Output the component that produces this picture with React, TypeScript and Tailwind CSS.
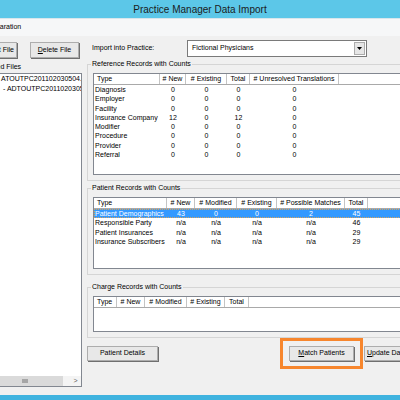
type Col = { label: string; w: string; left?: boolean };

const refCols: Col[] = [
  { label: 'Type', w: 'w-[66px]', left: true },
  { label: '# New', w: 'w-[26px]' },
  { label: '# Existing', w: 'w-[41px]' },
  { label: 'Total', w: 'w-[23px]' },
  { label: '# Unresolved Translations', w: 'w-[89px]' },
];

const refRows = [
  ['Diagnosis', '0', '0', '0', '0'],
  ['Employer', '0', '0', '0', '0'],
  ['Facility', '0', '0', '0', '0'],
  ['Insurance Company', '12', '0', '12', '0'],
  ['Modifier', '0', '0', '0', '0'],
  ['Procedure', '0', '0', '0', '0'],
  ['Provider', '0', '0', '0', '0'],
  ['Referral', '0', '0', '0', '0'],
];

const patientCols: Col[] = [
  { label: 'Type', w: 'w-[73px]', left: true },
  { label: '# New', w: 'w-[28px]' },
  { label: '# Modified', w: 'w-[42px]' },
  { label: '# Existing', w: 'w-[40px]' },
  { label: '# Possible Matches', w: 'w-[68px]' },
  { label: 'Total', w: 'w-[23px]' },
];

const patientRows = [
  ['Patient Demographics', '43', '0', '0', '2', '45'],
  ['Responsible Party', 'n/a', 'n/a', 'n/a', 'n/a', '46'],
  ['Patient Insurances', 'n/a', 'n/a', 'n/a', 'n/a', '29'],
  ['Insurance Subscribers', 'n/a', 'n/a', 'n/a', 'n/a', '29'],
];

const chargeCols: Col[] = [
  { label: 'Type', w: 'w-[23px]', left: true },
  { label: '# New', w: 'w-[28px]' },
  { label: '# Modified', w: 'w-[42px]' },
  { label: '# Existing', w: 'w-[38px]' },
  { label: 'Total', w: 'w-[24px]' },
];

function ListView({ cols, rows, height, selected }: { cols: Col[]; rows: string[][]; height: string; selected?: number }) {
  return (
    <div className={`${height} overflow-hidden border border-[#828790] bg-white`}>
      <div className="flex h-[11px] border-b border-[#a9a9a9] leading-[10px]">
        {cols.map((c) => (
          <div
            key={c.label}
            className={`${c.w} shrink-0 overflow-hidden whitespace-nowrap border-r border-[#c4c4c4] ${c.left ? 'pl-[3px]' : 'text-center'}`}
          >
            {c.label}
          </div>
        ))}
        <div className="flex-1 border-r border-[#c4c4c4]" />
      </div>
      {rows.map((r, i) => (
        <div
          key={r[0]}
          className={`flex h-[9.3px] leading-[9.3px] ${i === selected ? 'bg-[#3399ff] text-white outline outline-1 -outline-offset-1 outline-dotted outline-[#d9a35a]' : ''}`}
        >
          {r.map((v, j) => (
            <div key={j} className={`${cols[j].w} shrink-0 whitespace-nowrap ${j === 0 ? 'pl-[1px]' : 'text-center'}`}>
              {v}
            </div>
          ))}
        </div>
      ))}
    </div>
  );
}

function Group({ title, className, children }: { title: string; className: string; children: React.ReactNode }) {
  return (
    <div className={`border border-[#d5d5d5] pb-[5px] pl-[5px] ${className}`}>
      <div className="-ml-[2px] -mt-[6px] h-[10px] w-fit bg-[#f0f0f0] px-px leading-[10px]">{title}</div>
      <div className="mt-[4px]">{children}</div>
    </div>
  );
}

function Btn({ w, align = 'justify-center', children }: { w: string; align?: string; children: React.ReactNode }) {
  return (
    <div
      className={`${w} ${align} flex h-full shrink-0 items-center overflow-hidden whitespace-nowrap border border-[#adadad] bg-[#e8e8e8] shadow-[1px_1px_0_#6f6f6f]`}
    >
      {children}
    </div>
  );
}

export default function App() {
  return (
    <div className="h-[400px] w-[400px] overflow-hidden bg-[#f0f0f0] font-['Liberation_Sans',Arial,sans-serif] text-[7px] text-black">
      <div className="flex h-[18px] items-center justify-center bg-[#5cc7e8] text-[10px] text-[#1b1b1b]">
        Practice Manager Data Import
      </div>
      <div className="flex h-[18px] items-center border-t border-[#d8e6ec] bg-[#f6f7f8]">
        <span className="-ml-[15px]">Preparation</span>
      </div>

      <div className="flex h-[359px]">
        <div className="flex w-[82px] shrink-0 flex-col">
          <div className="-ml-[32px] mt-[6px] flex h-[16px] gap-[13px]">
            <Btn w="w-[49px]" align="justify-end pr-[2px]">
              <span className="underline">I</span>mport File
            </Btn>
            <Btn w="w-[49px]">
              <span className="underline">D</span>elete File
            </Btn>
          </div>
          <div className="-ml-[19px] mt-[4px] h-[10px] whitespace-nowrap leading-[10px]">Loaded Files</div>
          <div className="-ml-[4px] mt-[1px] flex h-[314px] flex-col overflow-hidden border border-[#828790] bg-white">
            <div className="h-[10px] whitespace-nowrap pl-[4px] leading-[10px]">ATOUTPC201102030504.txt</div>
            <div className="h-[10px] whitespace-nowrap pl-[6px] leading-[10px]">- ADTOUTPC201102030504.txt</div>
            <div className="mt-auto flex h-[10px]">
              <div className="flex w-[66px] items-center bg-[#dadada] pl-[25px]">
                <div className="h-[4px] w-[6px] bg-[#a6a6a6]" />
              </div>
              <div className="w-[7px] bg-[#f4f4f4]" />
              <div className="flex flex-1 items-center justify-center bg-[#f4f4f4] text-[7px] text-[#606060]">&gt;</div>
            </div>
          </div>
        </div>

        <div className="ml-[5px] flex w-[340px] shrink-0 flex-col">
          <div className="mt-[4px] flex h-[17px] items-center">
            <span className="ml-[5px] w-[95px] shrink-0">Import into Practice:</span>
            <div className="flex h-[17px] w-[180px] items-center border border-[#7a7a7a] bg-white">
              <span className="flex-1 pl-[4px]">Fictional Physicians</span>
              <span className="mr-px flex h-[13px] w-[11px] items-center justify-center border border-[#acacac] bg-[#e6e6e6]">
                <svg width="5" height="3" viewBox="0 0 5 3">
                  <path d="M0 0h5L2.5 3z" fill="#000" />
                </svg>
              </span>
            </div>
          </div>

          <Group title="Reference Records with Counts" className="mt-[7px]">
            <ListView cols={refCols} rows={refRows} height="h-[102px]" />
          </Group>

          <Group title="Patient Records with Counts" className="mt-[7px]">
            <ListView cols={patientCols} rows={patientRows} height="h-[72px]" selected={0} />
          </Group>

          <Group title="Charge Records with Counts" className="mt-[12px]">
            <ListView cols={chargeCols} rows={[]} height="h-[36px]" />
          </Group>

          <div className="mt-[8px] flex h-[15px]">
            <Btn w="w-[71px]">Patient Details</Btn>
            <div className="relative ml-[131px] flex">
              <Btn w="w-[65px]">
                <span className="underline">M</span>atch Patients
              </Btn>
              <div className="absolute -bottom-[8px] -left-[9px] -right-[9px] -top-[8px] border-[3px] border-[#f7862d]" />
            </div>
            <div className="ml-[10px] flex">
              <Btn w="w-[70px]" align="justify-start pl-[2px]">
                <span className="underline">U</span>pdate Database
              </Btn>
            </div>
          </div>
        </div>
      </div>

      <div className="h-[5px] bg-[#3fb3df]" />
    </div>
  );
}
